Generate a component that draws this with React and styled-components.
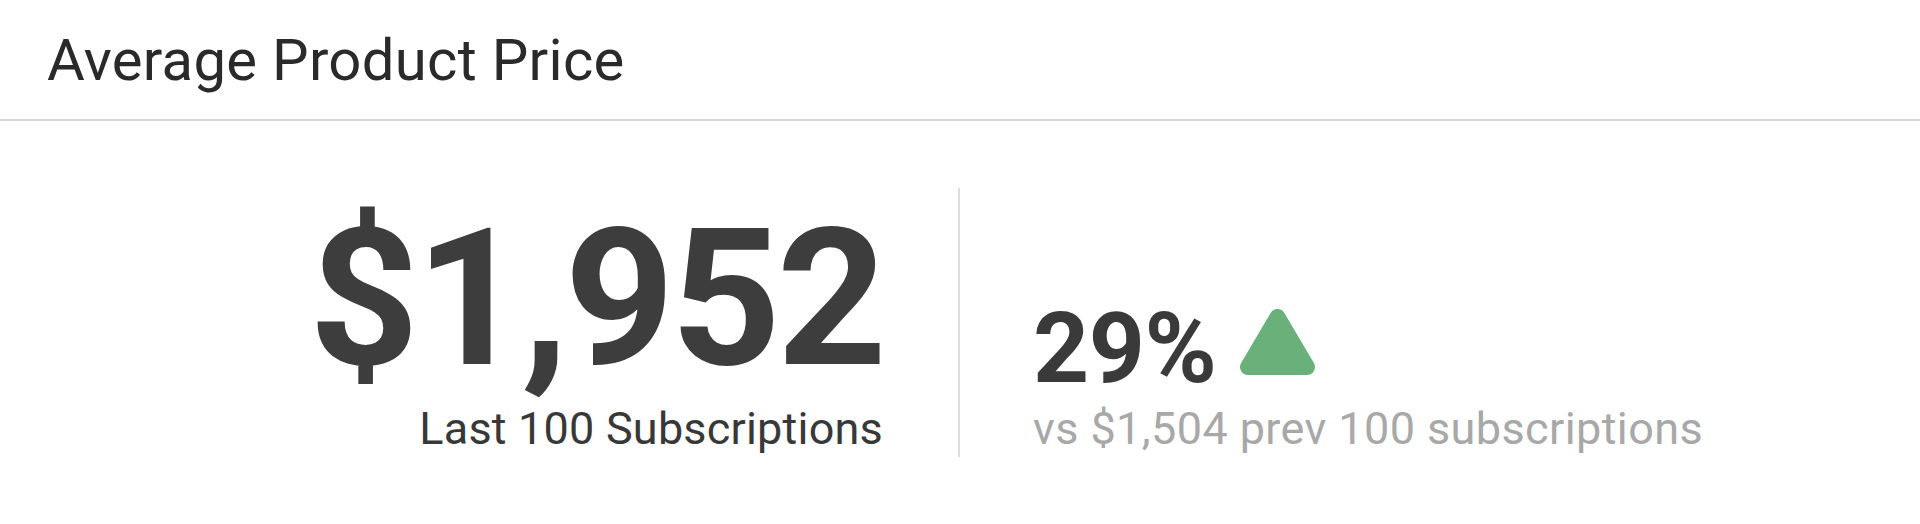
import React from 'react'
import styled, { createGlobalStyle } from 'styled-components'

const GlobalStyle = createGlobalStyle`
  html, body {
    margin: 0;
    padding: 0;
    background: #fff;
  }
  body {
    font-family: Roboto, "Liberation Sans", sans-serif;
  }
`

const Card = styled.section`
  width: 1920px;
  height: 524px;
  display: flex;
  flex-direction: column;
  background: #fff;
`

const Header = styled.header`
  height: 121px;
  flex: 0 0 auto;
  display: flex;
  align-items: center;
  padding-left: 47px;
  border-bottom: 2px solid #d6d6d6;
  box-sizing: border-box;
`

const Title = styled.h1`
  margin: 0;
  font-size: 58px;
  line-height: 1;
  font-weight: 400;
  letter-spacing: 0.3px;
  color: #2a2a2a;
`

const Body = styled.div`
  flex: 1;
  display: flex;
  align-items: center;
`

const Row = styled.div`
  width: 100%;
  height: 269px;
  display: flex;
`

const Column = styled.div`
  flex: 0 0 50%;
  box-sizing: border-box;
  display: flex;
  flex-direction: column;
  justify-content: flex-end;
  align-items: ${p => (p.$side === 'left' ? 'flex-end' : 'flex-start')};
  padding-bottom: 6px;
  ${p => (p.$side === 'left'
    ? 'padding-right: 75px; border-right: 2px solid #dcdcdc;'
    : 'padding-left: 73px;')}
`

const BigValue = styled.div`
  font-size: 192px;
  line-height: 0.94;
  font-weight: 700;
  letter-spacing: -4px;
  color: #3d3d3d;
  margin-bottom: 17px;
`

const Change = styled.div`
  display: flex;
  align-items: flex-end;
  gap: 24px;
  margin-bottom: 8px;
`

const ChangeValue = styled.span`
  font-size: 98px;
  line-height: 1;
  font-weight: 700;
  letter-spacing: -0.5px;
  color: #3a3a3a;
`

const Arrow = styled.svg`
  display: block;
  margin-bottom: 23px;
`

const Caption = styled.div`
  font-size: 45px;
  line-height: 1;
  letter-spacing: ${p => (p.$muted ? '0.4px' : '0.2px')};
  color: ${p => (p.$muted ? '#a8a8a8' : '#383838')};
`

function UpTriangle () {
  return (
    <Arrow width="75" height="67" viewBox="0 0 75 67">
      <polygon
        points="37.5,9 8,59 67,59"
        fill="#69b07a"
        stroke="#69b07a"
        strokeWidth="16"
        strokeLinejoin="round"
      />
    </Arrow>
  )
}

export default function App () {
  return (
    <>
      <GlobalStyle />
      <Card>
        <Header>
          <Title>Average Product Price</Title>
        </Header>
        <Body>
          <Row>
            <Column $side="left">
              <BigValue>$1,952</BigValue>
              <Caption>Last 100 Subscriptions</Caption>
            </Column>
            <Column $side="right">
              <Change>
                <ChangeValue>29%</ChangeValue>
                <UpTriangle />
              </Change>
              <Caption $muted>vs $1,504 prev 100 subscriptions</Caption>
            </Column>
          </Row>
        </Body>
      </Card>
    </>
  )
}
